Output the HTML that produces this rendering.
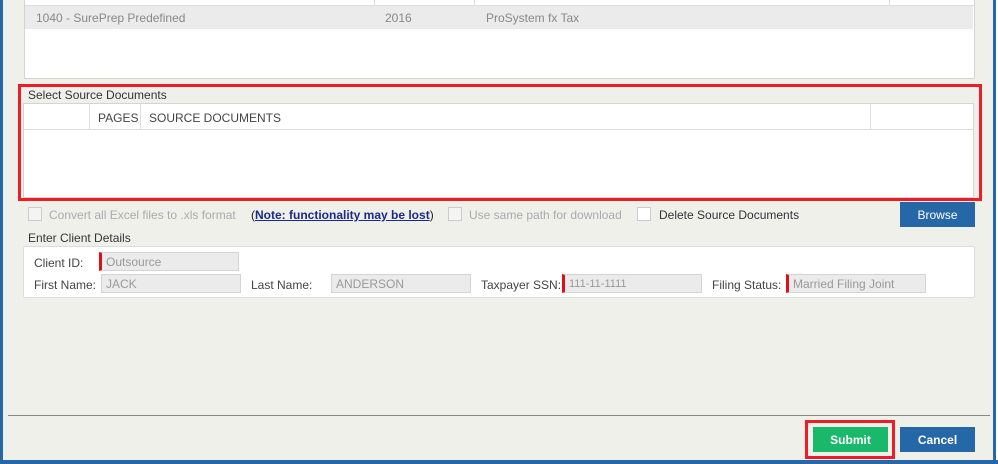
<!DOCTYPE html>
<html><head><style>
*{margin:0;padding:0;box-sizing:border-box}
body{width:998px;height:464px;background:#f0f0eb;font-family:"Liberation Sans",sans-serif;font-size:12px;color:#333;position:relative;overflow:hidden}
.a{position:absolute}
.inp{position:absolute;background:#ebebeb;border:1px solid #d4d4d4;color:#999;font-size:12px;padding-left:4px;line-height:18px;height:19px}
.req{border-left:3px solid #e0101a}
.lbl{position:absolute;color:#444;font-size:12px}
.cb{position:absolute;width:14px;height:14px;border:1px solid #ccc;background:#f4f4f4}
</style></head><body>
<div class="a" style="left:0;top:0;width:3px;height:464px;background:#2667a8"></div>
<div class="a" style="left:993px;top:0;width:3px;height:464px;background:#2667a8"></div>
<div class="a" style="left:996px;top:0;width:2px;height:464px;background:#fff"></div>
<div class="a" style="left:0;top:460px;width:998px;height:4px;background:#2667a8"></div>

<div class="a" style="left:24px;top:-2px;width:951px;height:81px;background:#fff;border:1px solid #d4d4d4"></div>
<div class="a" style="left:25px;top:5px;width:949px;height:1px;background:#ddd"></div>
<div class="a" style="left:374px;top:0;width:1px;height:6px;background:#ddd"></div>
<div class="a" style="left:474px;top:0;width:1px;height:6px;background:#ddd"></div>
<div class="a" style="left:889px;top:0;width:1px;height:6px;background:#ddd"></div>
<div class="a" style="left:25px;top:6px;width:948px;height:23px;background:#ebebeb"></div>
<div class="a" style="left:36px;top:11px;color:#888">1040 - SurePrep Predefined</div>
<div class="a" style="left:385px;top:11px;color:#888">2016</div>
<div class="a" style="left:486px;top:11px;color:#888">ProSystem fx Tax</div>

<div class="a" style="left:18px;top:84px;width:964px;height:117px;border:3px solid #ee1c25"></div>
<div class="a" style="left:28px;top:88px;color:#333">Select Source Documents</div>
<div class="a" style="left:23px;top:103px;width:951px;height:95px;background:#fff;border:1px solid #d4d4d4"></div>
<div class="a" style="left:24px;top:129px;width:949px;height:1px;background:#ddd"></div>
<div class="a" style="left:89px;top:104px;width:1px;height:25px;background:#ddd"></div>
<div class="a" style="left:140px;top:104px;width:1px;height:25px;background:#ddd"></div>
<div class="a" style="left:870px;top:104px;width:1px;height:25px;background:#ddd"></div>
<div class="a" style="left:98px;top:111px;color:#444">PAGES</div>
<div class="a" style="left:149px;top:111px;color:#444">SOURCE DOCUMENTS</div>

<div class="cb" style="left:28px;top:207px"></div>
<div class="a" style="left:49px;top:208px;color:#aaa">Convert all Excel files to .xls format</div>
<div class="a" style="left:251px;top:208px;color:#222">(<u style="color:#1a2a8a;font-weight:bold">Note: functionality may be lost</u>)</div>
<div class="cb" style="left:448px;top:207px"></div>
<div class="a" style="left:469px;top:208px;color:#aaa">Use same path for download</div>
<div class="cb" style="left:637px;top:207px;background:#fff"></div>
<div class="a" style="left:659px;top:208px;color:#333">Delete Source Documents</div>
<div class="a" style="left:900px;top:202px;width:75px;height:25px;background:#2667a8;color:#fff;text-align:center;line-height:26px">Browse</div>

<div class="a" style="left:28px;top:231px;color:#333">Enter Client Details</div>
<div class="a" style="left:23px;top:246px;width:952px;height:52px;background:#fff;border:1px solid #ddd;border-radius:2px"></div>
<div class="lbl" style="left:34px;top:256px">Client ID:</div>
<div class="inp req" style="left:99px;top:252px;width:140px">Outsource</div>
<div class="lbl" style="left:34px;top:278px">First Name:</div>
<div class="inp" style="left:101px;top:274px;width:140px">JACK</div>
<div class="lbl" style="left:251px;top:278px">Last Name:</div>
<div class="inp" style="left:331px;top:274px;width:140px">ANDERSON</div>
<div class="lbl" style="left:481px;top:278px">Taxpayer SSN:</div>
<div class="inp req" style="left:562px;top:274px;width:140px;font-size:11px">111-11-1111</div>
<div class="lbl" style="left:712px;top:278px">Filing Status:</div>
<div class="inp req" style="left:786px;top:274px;width:140px">Married Filing Joint</div>

<div class="a" style="left:8px;top:415px;width:982px;height:1px;background:#888"></div>
<div class="a" style="left:805px;top:420px;width:90px;height:39px;border:3px solid #ee1c25"></div>
<div class="a" style="left:813px;top:427px;width:75px;height:25px;background:#1ab86a;color:#fff;text-align:center;line-height:26px;font-weight:bold">Submit</div>
<div class="a" style="left:900px;top:427px;width:75px;height:25px;background:#2667a8;color:#fff;text-align:center;line-height:26px;font-weight:bold">Cancel</div>
</body></html>
